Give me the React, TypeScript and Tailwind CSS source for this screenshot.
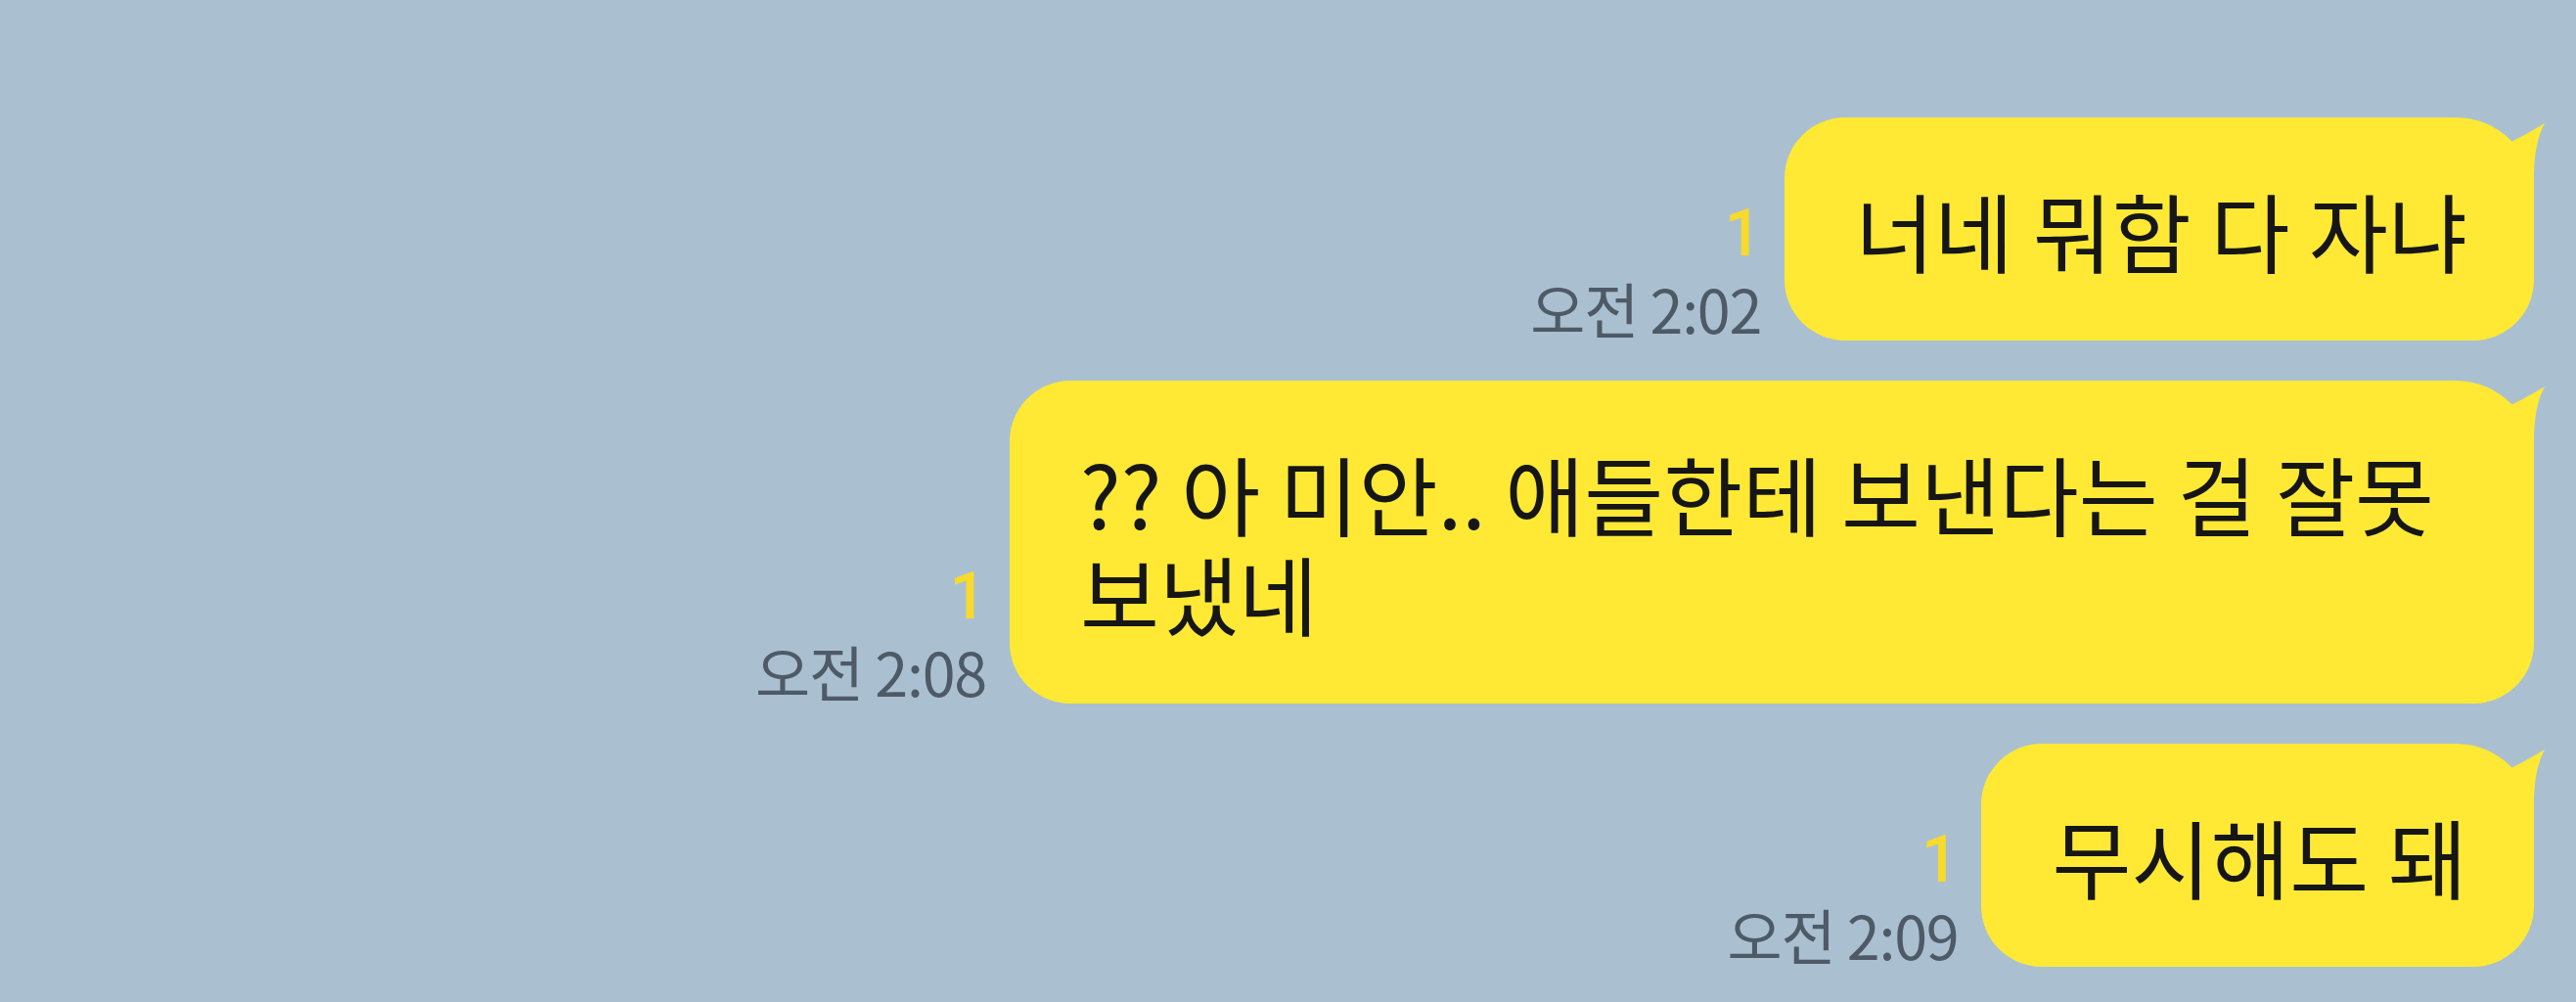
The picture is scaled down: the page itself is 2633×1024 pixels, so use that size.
import React from "react";

type Msg = {
  id: number;
  time: string;
  lines: string[];
  width?: string;
};

const messages: Msg[] = [
  { id: 1, time: "오전 2:02", lines: ["너네 뭐함 다 자냐"] },
  {
    id: 2,
    time: "오전 2:08",
    lines: ["?? 아 미안.. 애들한테 보낸다는 걸 잘못", "보냈네"],
    width: "w-[1558px]",
  },
  { id: 3, time: "오전 2:09", lines: ["무시해도 돼"] },
];

function Tail() {
  // little hook at the top-right corner of my bubbles
  return (
    <svg
      className="absolute -right-[14px] top-0"
      width="70"
      height="80"
      viewBox="0 0 70 80"
    >
      <path
        d="M22 30 Q44 20 67 6 Q57 24 56 56 L56 80 L10 80 Z"
        fill="#ffe934"
      />
    </svg>
  );
}

function Bubble({ msg }: { msg: Msg }) {
  return (
    <div className="flex items-end gap-[24px]">
      {/* unread count + time */}
      <div className="flex flex-col items-end pb-[3px]">
        <span
          className="mb-[12px] text-[66px] font-medium leading-[66px] text-[#f8da2a]"
          style={{ fontFamily: "Roboto, sans-serif" }}
        >
          1
        </span>
        <span className="text-[61px] leading-[61px] tracking-[-0.02em] text-[#4e5a66]">
          {msg.time}
        </span>
      </div>
      <div
        className={`relative rounded-[62px] rounded-tr-[80px] bg-[#ffe934] py-[63px] pl-[72px] pr-[68px] text-[88px] leading-[102px] whitespace-nowrap text-[#161616] ${
          msg.width ?? ""
        }`}
      >
        <Tail />
        <span className="relative">
          {msg.lines.map((line, i) => (
            <React.Fragment key={i}>
              {i > 0 && <br />}
              {line}
            </React.Fragment>
          ))}
        </span>
      </div>
    </div>
  );
}

export default function App() {
  return (
    <div
      className="flex h-[1024px] w-[2633px] flex-col items-end gap-[41px] overflow-hidden bg-[#aac0d1] pr-[43px] pt-[120px]"
      style={{ fontFamily: '"Noto Sans CJK KR", "Noto Sans", sans-serif' }}
    >
      {messages.map((m) => (
        <Bubble key={m.id} msg={m} />
      ))}
    </div>
  );
}
